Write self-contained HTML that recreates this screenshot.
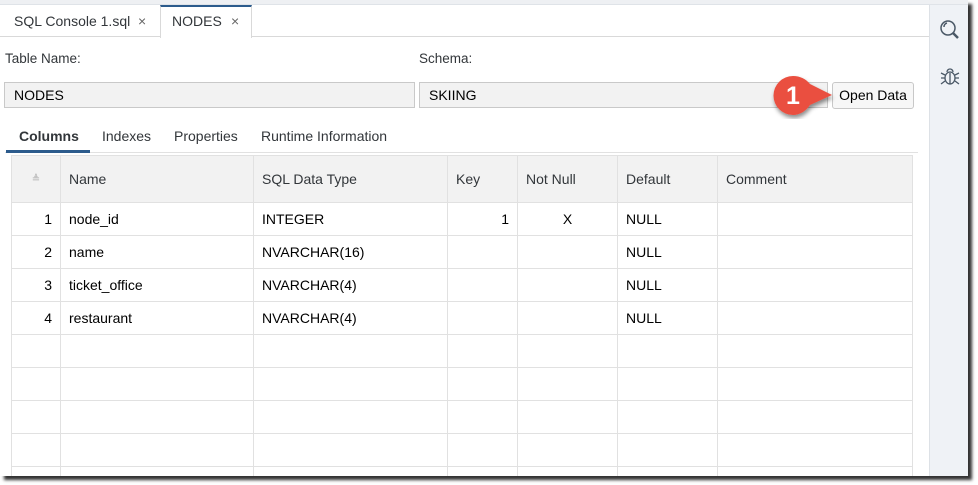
<!DOCTYPE html>
<html><head><style>
*{margin:0;padding:0;box-sizing:border-box}
body{width:978px;height:485px;background:#fff;font-family:"Liberation Sans",sans-serif;font-size:14px;color:#32363a;position:relative;overflow:hidden}
.frame{position:absolute;left:0;top:0;width:968px;height:476px;background:#fff;box-shadow:4px 4px 3px #333;overflow:hidden}
.topstrip{position:absolute;left:0;top:0;width:968px;height:5px;background:#eef0f3;border-bottom:1px solid #dfe3e8}
.side{position:absolute;left:929px;top:5px;width:39px;height:471px;background:#eff2f6;border-left:1px solid #dde1e6}
.tabs{position:absolute;left:0;top:5px;width:929px;height:32px;border-bottom:1px solid #d9d9d9}
.tab{position:absolute;top:0;height:32px;line-height:32px;font-size:14px;color:#32363a}
.lbl{position:absolute;top:51px;color:#32363a;font-size:13.5px}
.inp{position:absolute;top:82px;height:26px;background:#f2f2f2;border:1px solid #c9c9c9;line-height:24px;padding-left:9px;font-size:14px;color:#000}
.btn{position:absolute;left:832px;top:82px;width:82px;height:27px;border:1px solid #c8c8c8;border-radius:3px;background:#f7f7f7;line-height:25px;text-align:center;font-size:14px;color:#000}
.st{position:absolute;top:128px;font-size:14px;color:#32363a}
table{position:absolute;left:11px;top:155px;border-collapse:collapse;font-size:14px}
td{border:1px solid #e1e1e1;height:33px;padding:0 8px;color:#000;white-space:nowrap}
tr.h td{height:47px;background:#f2f2f2;color:#32363a}
</style></head><body>
<div class="frame">
<div class="topstrip"></div>
<div class="tabs">
 <div class="tab" style="left:14px">SQL Console 1.sql</div>
 <div class="tab" style="left:138px;color:#666">×</div>
 <div style="position:absolute;left:160px;top:0;width:92px;height:33px;background:#fff;border-left:1px solid #d9d9d9;border-right:1px solid #d9d9d9;border-top:2px solid #2c5b8c"></div>
 <div class="tab" style="left:172px">NODES</div>
 <div class="tab" style="left:231px;color:#666">×</div>
</div>
<div class="lbl" style="left:5px">Table Name:</div>
<div class="lbl" style="left:419px">Schema:</div>
<div class="inp" style="left:4px;width:411px">NODES</div>
<div class="inp" style="left:419px;width:409px">SKIING</div>
<div class="btn">Open Data</div>
<div style="position:absolute;left:5px;top:152px;width:913px;border-top:1px solid #e1e1e1"></div>
<div class="st" style="left:19px;font-weight:bold">Columns</div>
<div style="position:absolute;left:6px;top:150px;width:84px;height:3px;background:#2c5b8c"></div>
<div class="st" style="left:102px">Indexes</div>
<div class="st" style="left:174px">Properties</div>
<div class="st" style="left:261px">Runtime Information</div>
<table>
<tr class="h"><td style="width:49px;text-align:center;color:#aaa;font-size:10px">≜</td><td style="width:193px">Name</td><td style="width:194px">SQL Data Type</td><td style="width:70px">Key</td><td style="width:100px">Not Null</td><td style="width:100px">Default</td><td style="width:195px">Comment</td></tr>
<tr><td style="text-align:right">1</td><td>node_id</td><td>INTEGER</td><td style="text-align:right">1</td><td style="text-align:center">X</td><td>NULL</td><td></td></tr>
<tr><td style="text-align:right">2</td><td>name</td><td>NVARCHAR(16)</td><td></td><td></td><td>NULL</td><td></td></tr>
<tr><td style="text-align:right">3</td><td>ticket_office</td><td>NVARCHAR(4)</td><td></td><td></td><td>NULL</td><td></td></tr>
<tr><td style="text-align:right">4</td><td>restaurant</td><td>NVARCHAR(4)</td><td></td><td></td><td>NULL</td><td></td></tr>
<tr><td></td><td></td><td></td><td></td><td></td><td></td><td></td></tr>
<tr><td></td><td></td><td></td><td></td><td></td><td></td><td></td></tr>
<tr><td></td><td></td><td></td><td></td><td></td><td></td><td></td></tr>
<tr><td></td><td></td><td></td><td></td><td></td><td></td><td></td></tr>
<tr><td></td><td></td><td></td><td></td><td></td><td></td><td></td></tr>
</table>
<div class="side">
 <svg style="position:absolute;left:8px;top:13px" width="24" height="24" viewBox="0 0 24 24" fill="none" stroke="#4a5866" stroke-width="1.5"><circle cx="10" cy="10" r="7"/><path d="M6 9a4 4 0 0 1 3-4"/><path d="M15 15l5 5" stroke-width="2.5"/></svg>
 <svg style="position:absolute;left:9px;top:60px" width="22" height="22" viewBox="0 0 22 22" fill="none" stroke="#4a5866" stroke-width="1.3"><ellipse cx="11" cy="13" rx="5" ry="6"/><path d="M8 7a3 3 0 0 1 6 0M11 8v11M6 10l-4-2M16 10l4-2M6 13H2M16 13h4M6 16l-4 3M16 16l4 3"/></svg>
</div>
</div>
<svg style="position:absolute;left:765px;top:68px" width="75" height="58" viewBox="0 0 75 58"><defs><filter id="s"><feDropShadow dx="1" dy="3" stdDeviation="2" flood-opacity="0.45"/></filter></defs><path d="M28 8 C35 8 41 11 45 16 L67 27 L45 37 C41 43 35 47 28 47 A19.5 19.5 0 0 1 28 8Z" fill="#ea4f3f" filter="url(#s)"/><text x="28" y="36" font-family="Liberation Sans" font-weight="bold" font-size="25" fill="#fff" text-anchor="middle">1</text></svg>
</body></html>
